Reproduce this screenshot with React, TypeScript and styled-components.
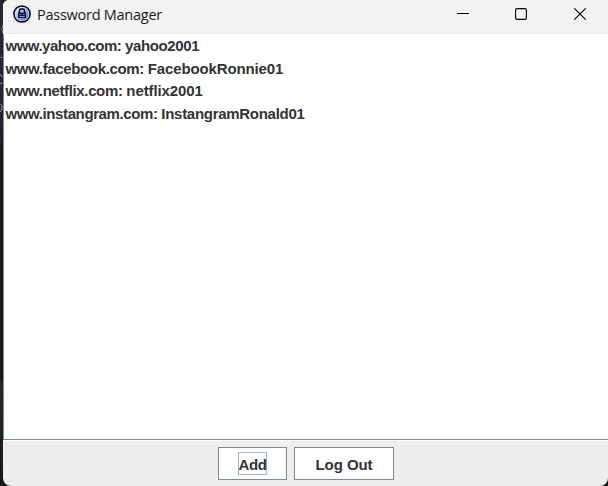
import React from 'react';
import styled, { createGlobalStyle } from 'styled-components';

const GlobalStyle = createGlobalStyle`
  * { box-sizing: border-box; }
  html, body { margin: 0; padding: 0; overflow: hidden; background: #1b1c20; }
`;

const Desktop = styled.div`
  display: flex;
  position: relative;
  width: 608px;
  height: 486px;
  padding-left: 3px;
  overflow: hidden;
  background: linear-gradient(#24252e 0, #24252e 120px, #17181b 160px, #17181b 380px, #26282b 382px, #202224 430px, #151618 486px);
`;

const Backdrop = styled.svg`
  position: absolute;
  left: 0;
  top: 0;
`;

const Window = styled.main`
  position: relative;
  display: flex;
  flex-direction: column;
  flex: 1;
  overflow: hidden;
  background: #eeeeee;
  border-radius: 6px 0 8px 8px;
`;

const TitleBar = styled.header`
  display: flex;
  align-items: center;
  height: 34px;
  padding: 0 0 5px 10px;
  background: #f3f3f3;
  border-bottom: 1px solid #ededed;
`;

const Title = styled.h1`
  flex: 1;
  margin: 0 0 0 6px;
  padding-top: 1px;
  font: 400 14.5px/20px 'Open Sans', 'Noto Sans', sans-serif;
  letter-spacing: -0.26px;
  color: #1a1a1a;
`;

const WindowControls = styled.div`
  display: flex;
  height: 28px;
`;

const ControlButton = styled.button<{ $width: number }>`
  display: flex;
  align-items: center;
  justify-content: center;
  width: ${(p) => p.$width}px;
  padding: 0;
  border: 0;
  background: transparent;

  &:last-child { padding-left: 2px; }
`;

const EntryList = styled.ul`
  flex: 1;
  margin: 0;
  padding: 1px 0 0 1.5px;
  list-style: none;
  background: #ffffff;
  border-left: 1px solid #7a8a99;
  border-bottom: 1px solid #7a8a99;
  box-shadow: 0 1px 0 #ffffff;
`;

const Entry = styled.li`
  height: 22.6px;
  font: 700 15px/22.6px 'Liberation Sans', Arial, sans-serif;
  color: #333333;
  white-space: pre;
`;

const EntryText = styled.span<{ $tracking: number }>`
  letter-spacing: ${(p) => p.$tracking}px;
`;

const ButtonBar = styled.footer`
  display: flex;
  gap: 7px;
  height: 46px;
  padding: 7px 0 0 215px;
`;

const ActionButton = styled.button<{ $width: number }>`
  display: flex;
  align-items: center;
  justify-content: center;
  width: ${(p) => p.$width}px;
  height: 33px;
  padding: 0;
  border: 1px solid #7a8a99;
  border-radius: 0;
  background: #ffffff;
  color: #333333;
  font: 700 15px/21px 'Liberation Sans', Arial, sans-serif;
`;

const ButtonLabel = styled.span<{ $focused?: boolean }>`
  display: flex;
  justify-content: center;
  width: ${(p) => (p.$focused ? '29px' : 'auto')};
  height: 23px;
  padding-top: 1px;
  letter-spacing: ${(p) => (p.$focused ? '-0.4px' : '-0.05px')};
  border: 1px solid ${(p) => (p.$focused ? '#a3b8cc' : 'transparent')};
`;

const entries = [
  { site: 'www.yahoo.com', password: 'yahoo2001', siteTracking: -0.5, passwordTracking: -0.38 },
  { site: 'www.facebook.com', password: 'FacebookRonnie01', siteTracking: -0.36, passwordTracking: -0.12 },
  { site: 'www.netflix.com', password: 'netflix2001', siteTracking: -0.36, passwordTracking: -0.1 },
  { site: 'www.instangram.com', password: 'InstangramRonald01', siteTracking: -0.39, passwordTracking: -0.29 },
];

const LockIcon = () => (
  <svg width="18" height="18" viewBox="0 0 18 18" aria-hidden="true">
    <defs>
      <linearGradient id="disc" x1="0" y1="0" x2="1" y2="1">
        <stop offset="0" stopColor="#eef2ff" />
        <stop offset="0.45" stopColor="#a3b8f0" />
        <stop offset="1" stopColor="#4b6cc8" />
      </linearGradient>
    </defs>
    <path d="M0 0H18V18H0Z" fill="#e9e9e9" />
    <circle cx="9" cy="9" r="8.1" fill="#dfe6fc" stroke="#05060d" strokeWidth="1.5" />
    <circle cx="9" cy="9" r="6.7" fill="url(#disc)" />
    <path d="M6.5 8V5.6q0-1.6 1.6-1.6h1.8q1.6 0 1.6 1.6V8" fill="none" stroke="#080b20" strokeWidth="1.4" />
    <path d="M5 7.5H13V13H5Z" fill="#10183a" />
    <path d="M6.5 9.5h1.5M10 9.5h1.5M6.5 11.5h5" stroke="#8fa6e8" strokeWidth="0.9" />
  </svg>
);

export default function App() {
  return (
    <Desktop>
      <GlobalStyle />
      <Backdrop width="4" height="486" aria-hidden="true">
        <path d="M3 25Q0 29 3 33M0 57.5H3" fill="none" stroke="#657a96" />
        <path d="M0 74.5Q2 75 2 77M0 84Q2 84 2 82M0 103.5Q2.5 105 2 108T0 112" fill="none" stroke="#8a98b0" />
      </Backdrop>
      <Window>
        <TitleBar>
          <LockIcon />
          <Title>Password Manager</Title>
          <WindowControls>
            <ControlButton $width={58} aria-label="Minimize">
              <svg width="12" height="12"><path d="M0 5.5H12" stroke="#000" /></svg>
            </ControlButton>
            <ControlButton $width={58} aria-label="Maximize">
              <svg width="12" height="12"><rect x="0.6" y="0.6" width="10.8" height="10.8" rx="1.3" fill="none" stroke="#000" strokeWidth="1.1" /></svg>
            </ControlButton>
            <ControlButton $width={58} aria-label="Close">
              <svg width="12" height="12"><path d="M0.3 0.3L11.7 11.7M11.7 0.3L0.3 11.7" stroke="#000" strokeWidth="1.1" /></svg>
            </ControlButton>
          </WindowControls>
        </TitleBar>
        <EntryList>
          {entries.map(({ site, password, siteTracking, passwordTracking }) => (
            <Entry key={site}>
              <EntryText $tracking={siteTracking}>{`${site}: `}</EntryText>
              <EntryText $tracking={passwordTracking}>{password}</EntryText>
            </Entry>
          ))}
        </EntryList>
        <ButtonBar>
          <ActionButton $width={69}><ButtonLabel $focused>Add</ButtonLabel></ActionButton>
          <ActionButton $width={100}><ButtonLabel>Log Out</ButtonLabel></ActionButton>
        </ButtonBar>
      </Window>
    </Desktop>
  );
}
